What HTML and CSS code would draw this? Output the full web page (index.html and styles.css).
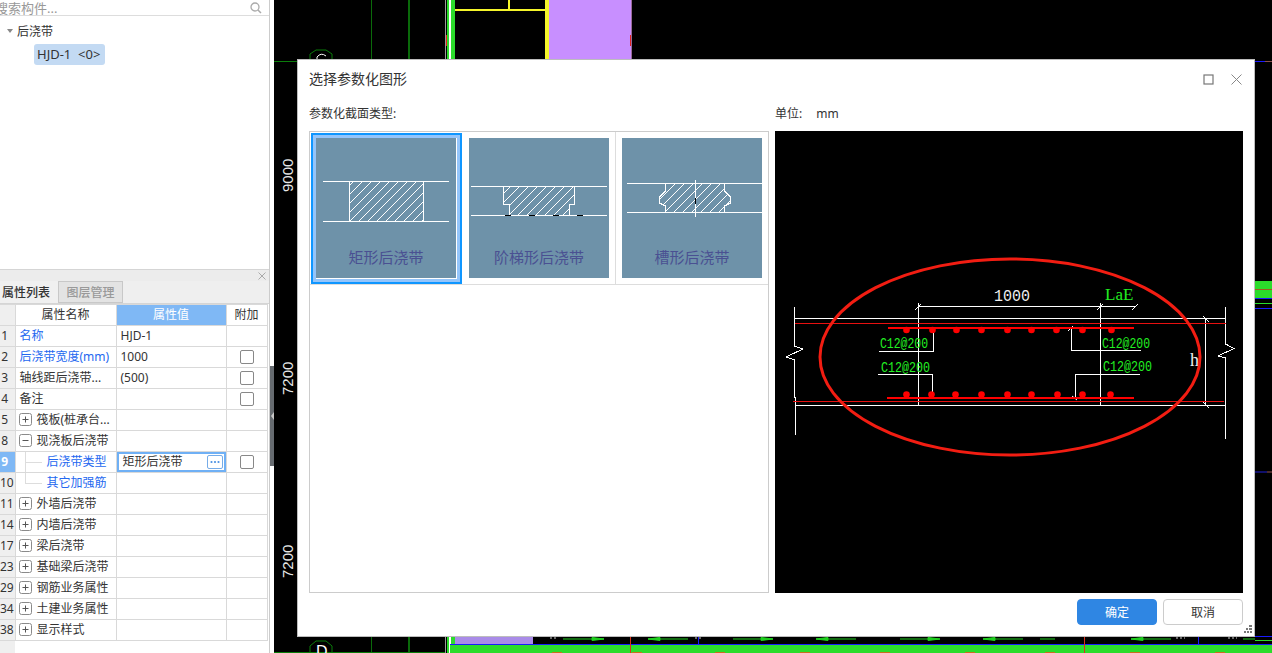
FILE: index.html
```html
<!DOCTYPE html>
<html lang="zh-CN">
<head>
    <meta charset="UTF-8">
    <meta name="viewport" content="width=device-width, initial-scale=1.0">
    <title>选择参数化图形</title>
    <link rel="stylesheet" href="styles.css">
</head>
<body>
    <svg class="defs" width="0" height="0">
        <defs>
            <pattern id="hatch" width="9" height="9" patternUnits="userSpaceOnUse">
                <path d="M0 9L9 0" stroke="#fff" stroke-width="1" fill="none"/>
            </pattern>
            <symbol id="plus" viewBox="0 0 13 13">
                <rect x="0.5" y="0.5" width="12" height="12" rx="2" fill="#fff" stroke="#8a8a8a"/>
                <path d="M3.5 6.5h6M6.5 3.5v6" stroke="#555" fill="none"/>
            </symbol>
            <symbol id="minus" viewBox="0 0 13 13">
                <rect x="0.5" y="0.5" width="12" height="12" rx="2" fill="#fff" stroke="#8a8a8a"/>
                <path d="M3.5 6.5h6" stroke="#555" fill="none"/>
            </symbol>
        </defs>
    </svg>

    <div class="app">
        <aside class="sidebar">
            <div class="sidebar-main">
                <section class="tree-panel">
                    <div class="search-row">
                        <span class="search-text">搜索构件...</span>
                        <svg class="search-icon" width="12" height="12" viewBox="0 0 12 12">
                            <circle cx="5" cy="5" r="4" fill="none" stroke="#aaa" stroke-width="1.3"/>
                            <path d="M8 8l3 3" stroke="#aaa" stroke-width="1.5"/>
                        </svg>
                    </div>
                    <div class="tree-group"><span class="caret"></span>后浇带</div>
                    <div class="tree-item"><span class="chip">HJD-1&nbsp; &lt;0&gt;</span></div>
                </section>

                <section class="props-panel">
                    <div class="props-bar">
                        <svg width="8" height="8" viewBox="0 0 8 8">
                            <path d="M0.5 0.5l7 7M7.5 0.5l-7 7" stroke="#aaa" fill="none"/>
                        </svg>
                    </div>
                    <div class="tabs">
                        <div class="tab tab-active">属性列表</div>
                        <div class="tab">图层管理</div>
                    </div>
                    <div class="table-wrap">
                        <table class="props">
                            <colgroup>
                                <col class="col-idx"><col class="col-name"><col class="col-value"><col class="col-extra">
                            </colgroup>
                            <tr class="head">
                                <th class="idx"></th>
                                <th>属性名称</th>
                                <th class="head-active">属性值</th>
                                <th>附加</th>
                            </tr>
                            <tr><td class="idx">1</td><td class="link">名称</td><td>HJD-1</td><td></td></tr>
                            <tr><td class="idx">2</td><td class="link">后浇带宽度(mm)</td><td>1000</td><td class="check"><span class="box"></span></td></tr>
                            <tr><td class="idx">3</td><td>轴线距后浇带...</td><td>(500)</td><td class="check"><span class="box"></span></td></tr>
                            <tr><td class="idx">4</td><td>备注</td><td></td><td class="check"><span class="box"></span></td></tr>
                            <tr><td class="idx">5</td><td class="group"><svg class="toggle"><use href="#plus"/></svg>筏板(桩承台...</td><td></td><td></td></tr>
                            <tr><td class="idx">8</td><td class="group"><svg class="toggle"><use href="#minus"/></svg>现浇板后浇带</td><td></td><td></td></tr>
                            <tr>
                                <td class="idx idx-active">9</td>
                                <td class="link child child-mid">后浇带类型</td>
                                <td class="editing">
                                    <div class="edit-row">
                                        <span>矩形后浇带</span>
                                        <span class="more">
                                            <svg width="10" height="4" viewBox="0 0 10 4">
                                                <circle cx="1.5" cy="2" r="1.1" fill="#4a90e2"/>
                                                <circle cx="5" cy="2" r="1.1" fill="#4a90e2"/>
                                                <circle cx="8.5" cy="2" r="1.1" fill="#4a90e2"/>
                                            </svg>
                                        </span>
                                    </div>
                                </td>
                                <td class="check"><span class="box"></span></td>
                            </tr>
                            <tr><td class="idx">10</td><td class="link child child-end">其它加强筋</td><td></td><td></td></tr>
                            <tr><td class="idx">11</td><td class="group"><svg class="toggle"><use href="#plus"/></svg>外墙后浇带</td><td></td><td></td></tr>
                            <tr><td class="idx">14</td><td class="group"><svg class="toggle"><use href="#plus"/></svg>内墙后浇带</td><td></td><td></td></tr>
                            <tr><td class="idx">17</td><td class="group"><svg class="toggle"><use href="#plus"/></svg>梁后浇带</td><td></td><td></td></tr>
                            <tr><td class="idx">23</td><td class="group"><svg class="toggle"><use href="#plus"/></svg>基础梁后浇带</td><td></td><td></td></tr>
                            <tr><td class="idx">29</td><td class="group"><svg class="toggle"><use href="#plus"/></svg>钢筋业务属性</td><td></td><td></td></tr>
                            <tr><td class="idx">34</td><td class="group"><svg class="toggle"><use href="#plus"/></svg>土建业务属性</td><td></td><td></td></tr>
                            <tr><td class="idx">38</td><td class="group"><svg class="toggle"><use href="#plus"/></svg>显示样式</td><td></td><td></td></tr>
                        </table>
                    </div>
                </section>
            </div>
            <div class="splitter"><div class="handle"></div></div>
        </aside>

        <main class="canvas">
            <!-- drawing behind the dialog, in page pixels -->
            <svg class="cad" width="998" height="653" viewBox="274 0 998 653">
                <g shape-rendering="crispEdges">
                    <path d="M274 61.5H297" stroke="#0b7d0b"/>
                    <path d="M371.5 0V59M371.5 637V652" stroke="#0a6a0a"/>
                    <path d="M408.5 0V59M408.5 637V652" stroke="#0a6a0a" stroke-width="2"/>
                    <path d="M274 652.5H445" stroke="#0b7d0b"/>

                    <rect x="445" y="0" width="1" height="59" fill="#999"/>
                    <rect x="447" y="0" width="8" height="59" fill="#2bdc2b"/>
                    <rect x="449" y="0" width="2" height="59" fill="#fff"/>
                    <rect x="446" y="35" width="1" height="11" fill="#e02020"/>
                    <rect x="455" y="9" width="90" height="2" fill="#f5f52a"/>
                    <rect x="508" y="0" width="2" height="9" fill="#f5f52a"/>
                    <rect x="545" y="0" width="4" height="59" fill="#f5f52a"/>
                    <rect x="549" y="0" width="82" height="59" fill="#c88fff"/>
                    <rect x="631" y="0" width="1" height="59" fill="#9a6a9a"/>
                    <rect x="630" y="35" width="1" height="11" fill="#e02020"/>

                    <rect x="445" y="637" width="1" height="16" fill="#999"/>
                    <rect x="447" y="637" width="8" height="16" fill="#2bdc2b"/>
                    <rect x="449" y="637" width="2" height="16" fill="#fff"/>
                    <rect x="455" y="637" width="78" height="7" fill="#a98be8"/>
                    <rect x="450" y="644" width="822" height="1" fill="#1a1aff"/>
                    <rect x="450" y="645" width="822" height="8" fill="#2bdc2b"/>
                    <path d="M630.5 637V653M1084.5 637V653" stroke="#d8301a"/>
                    <path d="M698.5 637V644M1198.5 637V644" stroke="#1a1aff"/>
                    <path d="M552 652.5h10M632 652.5h10M715 652.5h10M800 652.5h10M880 652.5h10M965 652.5h10M1045 652.5h10M1130 652.5h10M1215 652.5h10" stroke="#c8701a"/>

                    <rect x="1255" y="61" width="10" height="1" fill="#1a1aff"/>
                    <rect x="1265" y="61" width="7" height="1" fill="#8a5050"/>
                    <rect x="1255" y="281" width="17" height="17" fill="#2bdc2b"/>
                    <rect x="1255" y="289" width="17" height="1" fill="#a05a20"/>
                    <rect x="1255" y="298" width="17" height="1" fill="#1a1aff"/>
                    <rect x="1255" y="303" width="17" height="1" fill="#2bdc2b"/>
                    <rect x="1255" y="308" width="17" height="1" fill="#1a1aff"/>
                    <rect x="1255" y="471" width="12" height="2" fill="#10106a"/>
                    <rect x="1267" y="471" width="5" height="2" fill="#4a2a2a"/>
                    <rect x="1255" y="636" width="17" height="1" fill="#1a1aff"/>
                    <rect x="1255" y="640" width="17" height="1" fill="#2bdc2b"/>
                </g>

                <g fill="#1fd01f" stroke="#1fd01f">
                    <path d="M563 639H604" fill="none"/><path d="M592 637.5L604 639L592 640.5Z"/>
                    <path d="M648 639H688" fill="none"/><path d="M660 637.5L648 639L660 640.5Z"/>
                    <path d="M733 639H773" fill="none"/><path d="M761 637.5L773 639L761 640.5Z"/>
                    <path d="M816 639H856" fill="none"/><path d="M828 637.5L816 639L828 640.5Z"/>
                    <path d="M900 639H940" fill="none"/><path d="M928 637.5L940 639L928 640.5Z"/>
                    <path d="M983 639H1023" fill="none"/><path d="M995 637.5L983 639L995 640.5Z"/>
                    <path d="M1040 639H1055" fill="none"/>
                    <path d="M1131 639H1171" fill="none"/><path d="M1143 637.5L1131 639L1143 640.5Z"/>
                    <path d="M1243 639H1255" fill="none"/>
                </g>
                <path d="M550 638h8M695 638h8M1176 638h9M1228 638h9" stroke="#ccc" stroke-dasharray="2 2" fill="none"/>

                <path d="M310 59V54L316 50H326L332 54V59" fill="none" stroke="#0b7d0b"/>
                <path d="M317 59V57Q321 52 326 56" fill="none" stroke="#fff"/>
                <path d="M310 653V646L316 641H326L332 646V653" fill="none" stroke="#0b7d0b"/>
                <text class="cad-marker" x="316" y="657">D</text>

                <text class="cad-dim" transform="translate(293 192) rotate(-90)">9000</text>
                <text class="cad-dim" transform="translate(293 395) rotate(-90)">7200</text>
                <text class="cad-dim" transform="translate(293 578) rotate(-90)">7200</text>
            </svg>

            <div class="dialog">
                <div class="dialog-title">
                    <span>选择参数化图形</span>
                    <div class="window-btns">
                        <svg width="11" height="11" viewBox="0 0 11 11">
                            <rect x="1" y="1" width="9" height="9" fill="none" stroke="#777" stroke-width="1.2"/>
                        </svg>
                        <svg width="11" height="11" viewBox="0 0 11 11">
                            <path d="M0.5 0.5l10 10M10.5 0.5l-10 10" stroke="#888" fill="none"/>
                        </svg>
                    </div>
                </div>
                <div class="dialog-labels">
                    <div>参数化截面类型:</div>
                    <div>单位:<span class="unit">mm</span></div>
                </div>
                <div class="dialog-body">
                    <div class="shape-list">
                        <div class="shape-row">
                            <div class="shape shape-active">
                                <div class="thumb">
                                    <svg width="140" height="140" viewBox="0 0 140 140">
                                        <g shape-rendering="crispEdges" fill="none" stroke="#fff">
                                            <path d="M7 43.5H133M7 83.5H133"/>
                                            <rect x="33.5" y="43.5" width="74" height="40" fill="url(#hatch)"/>
                                        </g>
                                    </svg>
                                    <span>矩形后浇带</span>
                                </div>
                            </div>
                            <div class="shape">
                                <div class="thumb">
                                    <svg width="140" height="140" viewBox="0 0 140 140">
                                        <g shape-rendering="crispEdges" fill="none" stroke="#fff">
                                            <path d="M2 48.5H138M2 77.5H138"/>
                                            <path d="M34.5 48.5V66.5H40.5V77.5H100.5V66.5H105.5V48.5Z" fill="url(#hatch)"/>
                                            <path d="M36 77.5h6M60 77.5h6M84 77.5h6M108 77.5h6" stroke="#000"/>
                                        </g>
                                    </svg>
                                    <span>阶梯形后浇带</span>
                                </div>
                            </div>
                            <div class="shape">
                                <div class="thumb">
                                    <svg width="140" height="140" viewBox="0 0 140 140">
                                        <g fill="none" stroke="#fff" shape-rendering="crispEdges">
                                            <path d="M5 45.5H140M5 74.5H140M73.5 42V79"/>
                                            <path d="M43.5 45.5V53L37.5 59V65L43.5 68V74.5H102.5V68L108.5 65V59L102.5 53V45.5Z" fill="url(#hatch)"/>
                                            <path d="M73.5 60V66" stroke="#000"/>
                                        </g>
                                    </svg>
                                    <span>槽形后浇带</span>
                                </div>
                            </div>
                        </div>
                    </div>
                    <div class="preview">
                        <svg width="468" height="462" viewBox="775 131 468 462">
                            <g fill="none" stroke="#fff" shape-rendering="crispEdges">
                                <path d="M794.5 307V346L803 349L786 357L794.5 360V397L795.5 398V435"/>
                                <path d="M1225.5 307V344L1234 348.5L1218 356L1225.5 358V439"/>
                                <path d="M794 318.5H1226M795 405.5H1225"/>
                                <path d="M918.5 303V405M1100.5 303V405M1205.5 318V405"/>
                                <path d="M918 306.5H1135"/>
                                <path d="M879 351.5H933.5V333M878 374.5H932.5V394M1141 350.5H1071.5V328M1140 374.5H1075.5V397"/>
                            </g>
                            <g fill="none" stroke="#fff">
                                <path d="M915 310L921 304M1097 310L1103 304M1132 310L1138 304"/>
                                <path d="M1203 316L1209 322M1203 402L1209 408M1068 331L1073 326M1072 396L1077 400"/>
                            </g>
                            <g stroke="#e81010" shape-rendering="crispEdges" fill="none">
                                <path d="M795 323.5H1226M793 401.5H1224"/>
                                <path d="M888 328H1134M887 398H1134" stroke="#ff0000" stroke-width="2"/>
                            </g>
                            <g fill="#ff0000">
                                <circle cx="906.5" cy="330" r="3.3"/><circle cx="932.5" cy="330" r="3.3"/>
                                <circle cx="956.5" cy="330" r="3.3"/><circle cx="981.5" cy="330" r="3.3"/>
                                <circle cx="1007.5" cy="330" r="3.3"/><circle cx="1031.5" cy="330" r="3.3"/>
                                <circle cx="1056.5" cy="330" r="3.3"/><circle cx="1082.5" cy="330" r="3.3"/>
                                <circle cx="1111.5" cy="330" r="3.3"/>
                                <circle cx="906.5" cy="394.5" r="3.3"/><circle cx="931.5" cy="394.5" r="3.3"/>
                                <circle cx="955.5" cy="394.5" r="3.3"/><circle cx="981.5" cy="394.5" r="3.3"/>
                                <circle cx="1007.5" cy="394.5" r="3.3"/><circle cx="1031.5" cy="394.5" r="3.3"/>
                                <circle cx="1057.5" cy="394.5" r="3.3"/><circle cx="1082.5" cy="394.5" r="3.3"/>
                                <circle cx="1110.5" cy="394.5" r="3.3"/>
                            </g>
                            <text class="rebar" x="880" y="348" textLength="48" lengthAdjust="spacingAndGlyphs">C12@200</text>
                            <text class="rebar" x="881" y="372" textLength="49" lengthAdjust="spacingAndGlyphs">C12@200</text>
                            <text class="rebar" x="1102" y="348" textLength="48" lengthAdjust="spacingAndGlyphs">C12@200</text>
                            <text class="rebar" x="1103" y="371" textLength="49" lengthAdjust="spacingAndGlyphs">C12@200</text>
                            <text class="dim-white" x="994" y="301" textLength="36" lengthAdjust="spacingAndGlyphs">1000</text>
                            <text class="dim-green" x="1105" y="300">LaE</text>
                            <text class="dim-h" x="1190" y="366">h</text>
                            <ellipse cx="1010" cy="357" rx="190" ry="98" fill="none" stroke="#f21d12" stroke-width="3"/>
                        </svg>
                    </div>
                </div>
                <div class="dialog-footer">
                    <button class="btn btn-primary">确定</button>
                    <button class="btn">取消</button>
                    <svg class="grip" width="8" height="8" viewBox="0 0 8 8">
                        <path d="M5 0h3v2H5zM2 3h2v2H2zM5 3h3v2H5zM0 6h2v2H0zM3 6h2v2H3zM6 6h2v2H6z" fill="#777"/>
                    </svg>
                </div>
            </div>
        </main>
    </div>
</body>
</html>
```

FILE: styles.css
```css
* {
    box-sizing: border-box;
}
html, body {
    margin: 0;
    height: 100%;
    overflow: hidden;
}
body {
    font-family: "Noto Sans", "Noto Sans CJK SC", sans-serif;
    font-size: 12px;
    color: #333;
    background-color: #000;
}
.defs {
    display: block;
    height: 0;
}
.app {
    display: flex;
    width: 1272px;
    height: 653px;
}

/* left side */
.sidebar {
    display: flex;
    width: 274px;
    height: 653px;
    background-color: #fff;
}
.sidebar-main {
    display: flex;
    flex-direction: column;
    width: 270px;
    border-right: 1px solid #ccc;
}
.splitter {
    width: 4px;
    padding-top: 366px;
}
.handle {
    display: flex;
    align-items: center;
    justify-content: center;
    height: 100px;
    background-color: #666b70;
}
.handle::after {
    content: "";
    border-top: 4px solid transparent;
    border-bottom: 4px solid transparent;
    border-right: 3px solid #c8c8c8;
}
.tree-panel {
    height: 270px;
    border-bottom: 1px solid #d5d5d5;
}
.search-row {
    display: flex;
    align-items: center;
    justify-content: space-between;
    height: 16px;
    padding-right: 7px;
    border-bottom: 1px solid #ddd;
    overflow: hidden;
}
.search-text {
    margin-left: -5px;
    font-size: 13px;
    line-height: 14px;
    color: #999;
}
.tree-group {
    display: flex;
    align-items: center;
    height: 20px;
    margin-top: 5px;
    padding-left: 7px;
}
.caret {
    width: 0;
    height: 0;
    margin-right: 4px;
    border-left: 3px solid transparent;
    border-right: 3px solid transparent;
    border-top: 4px solid #888;
}
.tree-item {
    padding: 3px 0 0 34px;
}
.chip {
    display: inline-block;
    width: 71px;
    height: 21px;
    padding-left: 3px;
    font-size: 13px;
    line-height: 21px;
    white-space: nowrap;
    background-color: #c3daf3;
    border-radius: 3px;
}
.props-panel {
    display: flex;
    flex: 1;
    flex-direction: column;
}
.props-bar {
    display: flex;
    align-items: center;
    justify-content: flex-end;
    height: 11px;
    padding-right: 3px;
    background-color: #ececec;
}
.tabs {
    display: flex;
    height: 23px;
    background-color: #efefef;
    border-bottom: 1px solid #d5d5d5;
}
.tab {
    width: 65px;
    height: 22px;
    font-size: 12px;
    font-weight: 500;
    line-height: 22px;
    text-align: center;
    color: #999;
    background-color: #e3e3e3;
    border: 1px solid #c8c8c8;
}
.tab-active {
    width: 58px;
    padding-right: 6px;
    line-height: 24px;
    color: #333;
    background-color: #f0f0f0;
    border: 0;
}
.table-wrap {
    flex: 1;
    background: linear-gradient(to right, #efefef 15px, #fff 15px);
}
.props {
    width: 267px;
    table-layout: fixed;
    border-collapse: collapse;
}
.col-idx { width: 15px; }
.col-name { width: 101px; }
.col-value { width: 110px; }
.col-extra { width: 41px; }
.props th, .props td {
    height: 21px;
    padding: 0 0 0 4px;
    font-weight: 400;
    line-height: 20px;
    white-space: nowrap;
    overflow: hidden;
    border: 1px solid #d9d9d9;
}
.props th {
    padding: 0;
    text-align: center;
}
.props .head-active {
    color: #fff;
    background-color: #7fb8f5;
}
.props .idx {
    padding: 0 5px 0 0;
    text-align: center;
    background-color: #efefef;
    border-left: 0;
}
.props .idx-active {
    font-weight: 700;
    color: #fff;
    background-color: #7fb8f5;
}
.link {
    color: #2468f0;
}
.props .group {
    padding-left: 3px;
    color: #333;
}
.toggle {
    width: 13px;
    height: 13px;
    margin-right: 5px;
    vertical-align: -2px;
}
.props .child {
    padding-left: 31px;
    background-repeat: no-repeat;
}
.child-mid {
    background-image: linear-gradient(#ddd, #ddd), linear-gradient(#ddd, #ddd);
    background-position: 9px 0, 9px 10px;
    background-size: 1px 100%, 17px 1px;
}
.child-end {
    background-image: linear-gradient(#ddd, #ddd), linear-gradient(#ddd, #ddd);
    background-position: 9px 0, 9px 10px;
    background-size: 1px 10px, 17px 1px;
}
.check {
    text-align: center;
}
.props td.check {
    padding: 0;
}
.box {
    display: inline-block;
    width: 14px;
    height: 14px;
    vertical-align: -3px;
    background-color: #fff;
    border: 1px solid #888;
    border-radius: 2px;
}
.props .editing {
    padding: 0 0 0 4px;
    box-shadow: inset 0 0 0 2px #6fb0f5;
}
.edit-row {
    display: flex;
    align-items: center;
    justify-content: space-between;
    padding: 0 3px 0 2px;
}
.more {
    display: flex;
    align-items: center;
    justify-content: center;
    width: 16px;
    height: 14px;
    border: 1px solid #76ace8;
    border-radius: 2px;
}

/* canvas and dialog */
.canvas {
    position: relative;
    flex: 1;
    background-color: #000;
}
.cad {
    position: absolute;
    top: 0;
    left: 0;
}
.cad-dim {
    font-family: "Liberation Sans", sans-serif;
    font-size: 15px;
    fill: #e8e8e8;
}
.cad-marker {
    font-family: "Liberation Sans", sans-serif;
    font-size: 16px;
    fill: #fff;
}
.dialog {
    position: absolute;
    top: 59px;
    left: 23px;
    display: flex;
    flex-direction: column;
    width: 958px;
    height: 578px;
    padding: 0 11px;
    background-color: #fff;
    border: 1px solid #bdbdbd;
}
.dialog-title {
    display: flex;
    align-items: center;
    justify-content: space-between;
    height: 38px;
    font-size: 14px;
    line-height: 38px;
}
.window-btns {
    display: flex;
    gap: 17px;
    margin-right: 1px;
}
.dialog-labels {
    display: grid;
    grid-template-columns: 460px 468px;
    gap: 6px;
    height: 33px;
    padding-top: 2px;
    line-height: 28px;
}
.unit {
    margin-left: 14px;
}
.dialog-body {
    display: grid;
    grid-template-columns: 460px 468px;
    gap: 6px;
    height: 462px;
}
.shape-list {
    background-color: #fff;
    border: 1px solid #ccc;
}
.shape-row {
    display: flex;
    border-bottom: 1px solid #ddd;
}
.shape {
    flex: none;
    width: 153px;
    height: 152px;
    padding: 6px 5px 5px 6px;
    border-right: 1px solid #ddd;
}
.shape:last-child {
    width: 152px;
    border-right: 0;
}
.shape-active {
    width: 151px;
    height: 151px;
    margin: 1px 1px 0 1px;
    padding: 3px 4px 3px 3px;
    border: 2px solid #0f96ff;
    box-shadow: inset 0 0 0 3px #94c5fb;
}
.thumb {
    display: flex;
    flex-direction: column;
    align-items: center;
    width: 140px;
    height: 140px;
    font-size: 15px;
    color: #4a5092;
    background-color: #6e92a9;
}
.thumb svg {
    flex: none;
    margin-bottom: -140px;
}
.thumb span {
    margin-top: 109px;
    line-height: 20px;
}
.preview {
    background-color: #000;
}
.preview svg {
    display: block;
}
.rebar {
    font-family: "Liberation Mono", monospace;
    font-size: 14px;
    fill: #22ee22;
}
.dim-white {
    font-family: "Liberation Mono", monospace;
    font-size: 17px;
    fill: #f0f0f0;
}
.dim-green {
    font-family: "Liberation Serif", serif;
    font-size: 17px;
    fill: #22ee22;
}
.dim-h {
    font-family: "Liberation Serif", serif;
    font-size: 18px;
    fill: #f0f0f0;
}
.dialog-footer {
    position: relative;
    display: flex;
    justify-content: flex-end;
    gap: 6px;
    padding-top: 6px;
}
.btn {
    width: 80px;
    height: 26px;
    padding: 0;
    font-family: inherit;
    font-size: 12px;
    color: #333;
    background-color: #fff;
    border: 1px solid #ccc;
    border-radius: 4px;
}
.btn-primary {
    color: #fff;
    background-color: #2f86e3;
    border-color: #2f86e3;
}
.grip {
    position: absolute;
    top: 32px;
    right: -9px;
}
```
